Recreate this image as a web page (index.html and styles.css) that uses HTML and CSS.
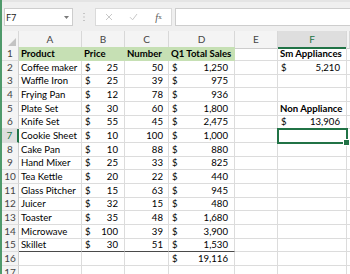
FILE: index.html
```html
<!DOCTYPE html>
<html lang="en">
<head>
  <meta charset="UTF-8">
  <meta name="viewport" content="width=device-width, initial-scale=1.0">
  <title>Q1 Sales</title>
  <link rel="stylesheet" href="styles.css">
</head>
<body>
  <div class="app">
    <div class="toolbar">
      <div class="namebox">
        <span>F7</span>
        <svg class="caret" width="5" height="3" viewBox="0 0 5 3"><path d="M0 0h5L2.5 3z" fill="#7a7a7a"/></svg>
      </div>
      <div class="grip">
        <svg width="2" height="8" viewBox="0 0 2 8"><rect x="0.5" y="0" width="1" height="1" fill="#9a9a9a"/><rect x="0.5" y="3.5" width="1" height="1" fill="#9a9a9a"/><rect x="0.5" y="7" width="1" height="1" fill="#9a9a9a"/></svg>
      </div>
      <div class="fx-buttons">
        <span class="fx-btn">
          <svg width="8" height="8" viewBox="0 0 8 8"><path d="M1 1l6 6M7 1l-6 6" stroke="#c8c8c8" stroke-width="1" fill="none"/></svg>
        </span>
        <span class="fx-btn">
          <svg width="9" height="8" viewBox="0 0 9 8"><path d="M1 4.2l2.6 2.6L8 1" stroke="#c8c8c8" stroke-width="1" fill="none"/></svg>
        </span>
        <span class="fx-btn fx"><i>f</i><sub>x</sub></span>
      </div>
      <div class="formula"></div>
    </div>

    <div class="sheet">
      <div class="row colhdr">
        <div class="corner">
          <svg width="8" height="8" viewBox="0 0 8 8"><path d="M8 0v8H0z" fill="#c3c3c3"/></svg>
        </div>
        <div class="ch">A</div><div class="ch">B</div><div class="ch">C</div><div class="ch">D</div><div class="ch">E</div><div class="ch sel">F</div><div class="ch"></div>
      </div>

      <div class="row">
        <div class="rh">1</div>
        <div class="c hd">Product</div><div class="c hd">Price</div><div class="c hd">Number</div><div class="c hd">Q1 Total Sales</div>
        <div class="c"></div><div class="c bold">Sm Appliances</div><div class="c"></div>
      </div>
      <div class="row">
        <div class="rh">2</div>
        <div class="c">Coffee maker</div><div class="c acct"><span>$</span><span>25</span></div><div class="c num">50</div><div class="c acct"><span>$</span><span>1,250</span></div>
        <div class="c"></div><div class="c acct"><span>$</span><span>5,210</span></div><div class="c"></div>
      </div>
      <div class="row">
        <div class="rh">3</div>
        <div class="c">Waffle Iron</div><div class="c acct"><span>$</span><span>25</span></div><div class="c num">39</div><div class="c acct"><span>$</span><span>975</span></div>
        <div class="c"></div><div class="c"></div><div class="c"></div>
      </div>
      <div class="row">
        <div class="rh">4</div>
        <div class="c">Frying Pan</div><div class="c acct"><span>$</span><span>12</span></div><div class="c num">78</div><div class="c acct"><span>$</span><span>936</span></div>
        <div class="c"></div><div class="c"></div><div class="c"></div>
      </div>
      <div class="row">
        <div class="rh">5</div>
        <div class="c">Plate Set</div><div class="c acct"><span>$</span><span>30</span></div><div class="c num">60</div><div class="c acct"><span>$</span><span>1,800</span></div>
        <div class="c"></div><div class="c bold">Non Appliance</div><div class="c"></div>
      </div>
      <div class="row">
        <div class="rh">6</div>
        <div class="c">Knife Set</div><div class="c acct"><span>$</span><span>55</span></div><div class="c num">45</div><div class="c acct"><span>$</span><span>2,475</span></div>
        <div class="c"></div><div class="c acct"><span>$</span><span>13,906</span></div><div class="c"></div>
      </div>
      <div class="row">
        <div class="rh sel">7</div>
        <div class="c">Cookie Sheet</div><div class="c acct"><span>$</span><span>10</span></div><div class="c num">100</div><div class="c acct"><span>$</span><span>1,000</span></div>
        <div class="c"></div><div class="c active"></div><div class="c"></div>
      </div>
      <div class="row">
        <div class="rh">8</div>
        <div class="c">Cake Pan</div><div class="c acct"><span>$</span><span>10</span></div><div class="c num">88</div><div class="c acct"><span>$</span><span>880</span></div>
        <div class="c"></div><div class="c"></div><div class="c"></div>
      </div>
      <div class="row">
        <div class="rh">9</div>
        <div class="c">Hand Mixer</div><div class="c acct"><span>$</span><span>25</span></div><div class="c num">33</div><div class="c acct"><span>$</span><span>825</span></div>
        <div class="c"></div><div class="c"></div><div class="c"></div>
      </div>
      <div class="row">
        <div class="rh">10</div>
        <div class="c">Tea Kettle</div><div class="c acct"><span>$</span><span>20</span></div><div class="c num">22</div><div class="c acct"><span>$</span><span>440</span></div>
        <div class="c"></div><div class="c"></div><div class="c"></div>
      </div>
      <div class="row">
        <div class="rh">11</div>
        <div class="c">Glass Pitcher</div><div class="c acct"><span>$</span><span>15</span></div><div class="c num">63</div><div class="c acct"><span>$</span><span>945</span></div>
        <div class="c"></div><div class="c"></div><div class="c"></div>
      </div>
      <div class="row">
        <div class="rh">12</div>
        <div class="c">Juicer</div><div class="c acct"><span>$</span><span>32</span></div><div class="c num">15</div><div class="c acct"><span>$</span><span>480</span></div>
        <div class="c"></div><div class="c"></div><div class="c"></div>
      </div>
      <div class="row">
        <div class="rh">13</div>
        <div class="c">Toaster</div><div class="c acct"><span>$</span><span>35</span></div><div class="c num">48</div><div class="c acct"><span>$</span><span>1,680</span></div>
        <div class="c"></div><div class="c"></div><div class="c"></div>
      </div>
      <div class="row">
        <div class="rh">14</div>
        <div class="c">Microwave</div><div class="c acct"><span>$</span><span>100</span></div><div class="c num">39</div><div class="c acct"><span>$</span><span>3,900</span></div>
        <div class="c"></div><div class="c"></div><div class="c"></div>
      </div>
      <div class="row">
        <div class="rh">15</div>
        <div class="c under">Skillet</div><div class="c acct under"><span>$</span><span>30</span></div><div class="c num under">51</div><div class="c acct under"><span>$</span><span>1,530</span></div>
        <div class="c"></div><div class="c"></div><div class="c"></div>
      </div>
      <div class="row">
        <div class="rh">16</div>
        <div class="c"></div><div class="c"></div><div class="c"></div><div class="c acct"><span>$</span><span>19,116</span></div>
        <div class="c"></div><div class="c"></div><div class="c"></div>
      </div>
      <div class="row">
        <div class="rh">17</div>
        <div class="c"></div><div class="c"></div><div class="c"></div><div class="c"></div>
        <div class="c"></div><div class="c"></div><div class="c"></div>
      </div>
    </div>
  </div>
</body>
</html>
```

FILE: styles.css
```css
body {
  margin: 0;
  font-family: Lato, 'Liberation Sans', sans-serif;
  font-size: 9.6px;
  color: #000;
  background-color: #fff;
  overflow: hidden;
}
.app {
  border-left: 2px solid #4f9a6b;
  height: 274px;
}

/* formula bar */
.toolbar {
  display: flex;
  align-items: flex-start;
  height: 31px;
  box-sizing: border-box;
  padding-top: 6px;
  background-color: #efefef;
  border-top: 2px solid #e4e4e4;
}
.namebox {
  display: flex;
  align-items: center;
  justify-content: space-between;
  width: 69px;
  height: 18px;
  margin-left: 2px;
  box-sizing: border-box;
  padding: 0 3px 0 1px;
  background-color: #fff;
  border: 1px solid #cdcdcd;
  font-family: 'Noto Sans', sans-serif;
  font-size: 9.5px;
  color: #222;
}
.grip {
  display: flex;
  justify-content: center;
  align-items: center;
  width: 22px;
  height: 18px;
}
.fx-buttons {
  display: flex;
  width: 77px;
  height: 18px;
  box-sizing: border-box;
  background-color: #fff;
  border: 1px solid #dadada;
}
.fx-btn {
  display: flex;
  align-items: center;
  justify-content: center;
  width: 25px;
}
.fx {
  font-family: 'Liberation Serif', serif;
  font-size: 10px;
  color: #555;
}
.fx sub {
  font-size: 7px;
  vertical-align: -1px;
}
.formula {
  flex: 1;
  height: 18px;
  margin-left: 3px;
  box-sizing: border-box;
  background-color: #fff;
  border: 1px solid #cdcdcd;
  border-right: none;
}

/* grid */
.row {
  display: grid;
  grid-template-columns: 17px 63px 43px 44px 66px 43px 69px 1fr;
  height: 13.67px;
}
.row > div {
  box-sizing: border-box;
  white-space: nowrap;
}
.colhdr {
  height: 16px;
}
.corner, .ch {
  background-color: #f4f4f4;
  border-right: 1px solid #d8d8d8;
  border-bottom: 1px solid #cdcdcd;
}
.corner {
  display: flex;
  align-items: flex-end;
  justify-content: flex-end;
  padding: 0 2px 2px 0;
}
.ch {
  text-align: center;
  line-height: 15px;
  padding-top: 1px;
  font-size: 10px;
  color: #444;
}
.ch.sel {
  background-color: #dedede;
  color: #217346;
  border-bottom: 2px solid #217346;
}
.rh {
  background-color: #f4f4f4;
  border-right: 1px solid #cdcdcd;
  border-bottom: 1px solid #dedede;
  text-align: center;
  line-height: 13px;
  font-size: 10px;
  color: #444;
}
.rh.sel {
  background-color: #dedede;
  color: #217346;
  border-right: 2px solid #217346;
}
.c {
  border-right: 1px solid #dcdcdc;
  border-bottom: 1px solid #dcdcdc;
  line-height: 13px;
  padding: 0 2px;
}
.hd {
  background-color: #c6e0b4;
  border-color: #c6e0b4;
  font-weight: 700;
}
.bold {
  font-weight: 700;
}
.num {
  text-align: right;
  padding-right: 5px;
}
.acct {
  display: flex;
  justify-content: space-between;
  padding: 0 6px 0 3px;
}
.under {
  border-bottom: 1px solid #4a4a4a;
}
.active {
  position: relative;
  outline: 2px solid #217346;
  outline-offset: -1px;
}
.active::after {
  content: '';
  position: absolute;
  right: -4px;
  bottom: -4px;
  width: 5px;
  height: 5px;
  background-color: #217346;
  border: 1px solid #fff;
}
```
